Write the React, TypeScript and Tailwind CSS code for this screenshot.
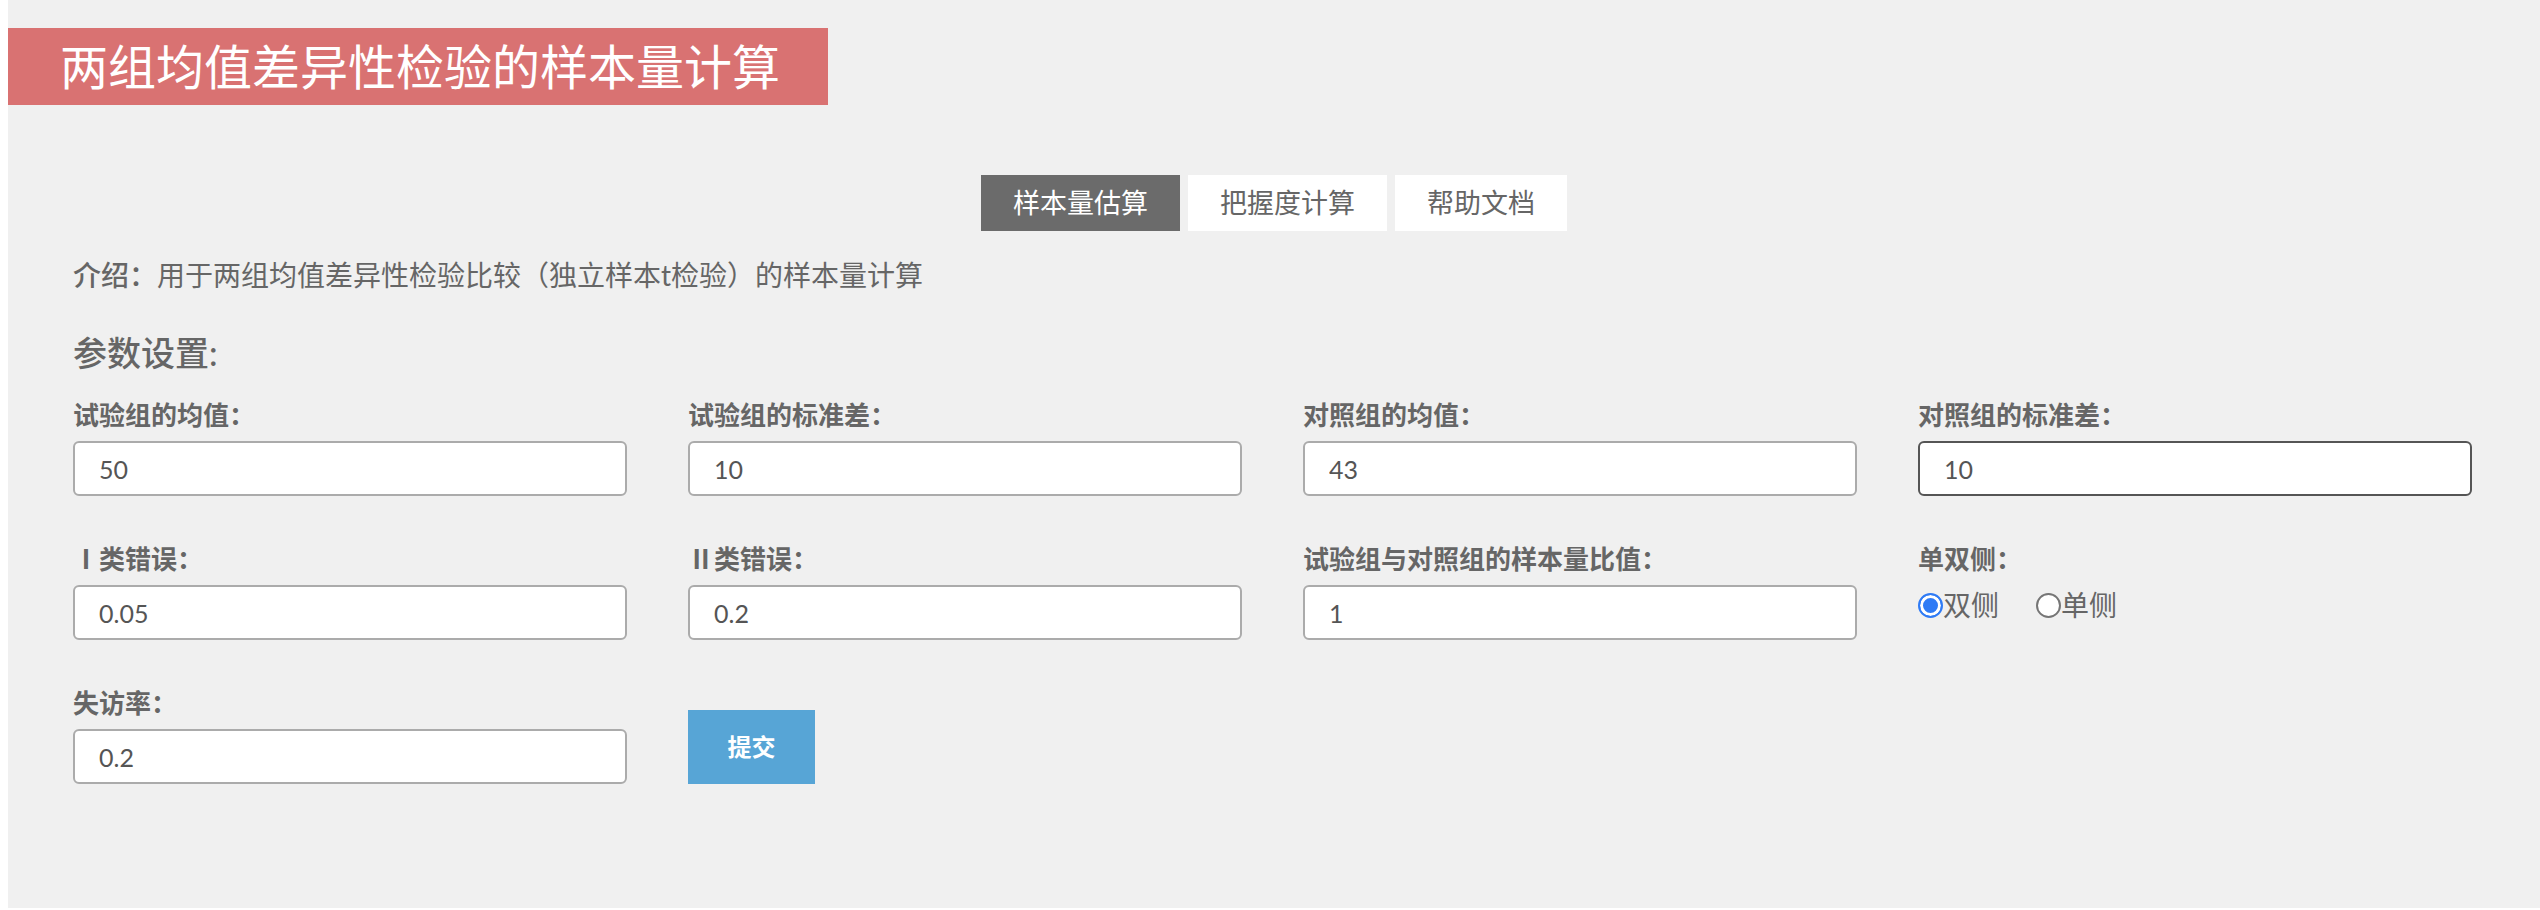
import { useState } from "react";

const fields = [
  { label: "试验组的均值：", value: "50" },
  { label: "试验组的标准差：", value: "10" },
  { label: "对照组的均值：", value: "43" },
  { label: "对照组的标准差：", value: "10", focused: true },
  { label: "Ⅰ类错误：", value: "0.05" },
  { label: "Ⅱ类错误：", value: "0.2" },
  { label: "试验组与对照组的样本量比值：", value: "1" },
];

const tabs = ["样本量估算", "把握度计算", "帮助文档"];

function Field({ label, value, focused }: { label: string; value: string; focused?: boolean }) {
  return (
    <div className="flex flex-col">
      <label className="h-[39px] leading-[39px] mb-[6px] text-[26px] font-bold text-[#666]">{label}</label>
      <input
        defaultValue={value}
        className={
          "h-[55px] w-full rounded-[6px] border-2 bg-white pl-[24px] text-[25px] text-[#555] outline-none " +
          (focused ? "border-[#555]" : "border-[#ababab]")
        }
      />
    </div>
  );
}

export default function App() {
  const [tab, setTab] = useState(0);
  const [side, setSide] = useState("two");

  return (
    <div
      className="min-h-[910px] bg-white pl-2"
      style={{ fontFamily: 'Lato, "Noto Sans CJK SC", sans-serif' }}
    >
      <div className="h-[908px] bg-[#f0f0f0] pt-[28px]">
        {/* 标题 */}
        <div className="flex h-[77px] w-[820px] items-center bg-[#d97272] pl-[52px] text-[48px] text-white">
          两组均值差异性检验的样本量计算
        </div>

        {/* 选项卡 */}
        <div className="mt-[70px] flex justify-center gap-2">
          {tabs.map((t, i) => (
            <button
              key={t}
              onClick={() => setTab(i)}
              className={
                "h-[56px] px-8 text-[27px] " +
                (tab === i ? "bg-[#6b6b6b] text-white" : "bg-white text-[#666]")
              }
            >
              {t}
            </button>
          ))}
        </div>

        <div className="pl-[65px] pr-[68px]">
          <p className="mt-[24px] text-[28px] leading-[40px] text-[#666]">
            <span className="font-medium">介绍：</span>用于两组均值差异性检验比较（独立样本t检验）的样本量计算
          </p>

          <h2 className="mt-[34px] text-[34px] font-medium leading-[48px] text-[#666]">参数设置:</h2>

          <div className="mt-[19px] grid grid-cols-4 gap-x-[61px] gap-y-[44px]">
            {fields.map((f) => (
              <Field key={f.label} {...f} />
            ))}

            <div className="flex flex-col">
              <label className="h-[39px] leading-[39px] mb-[6px] text-[26px] font-bold text-[#666]">单双侧：</label>
              <div className="flex h-[40px] items-center gap-[37px] text-[28px] text-[#666]">
                <label className="flex items-center">
                  <input
                    type="radio"
                    name="side"
                    checked={side === "two"}
                    onChange={() => setSide("two")}
                    className="h-[25px] w-[25px] appearance-none rounded-full border-2 border-[#767676] bg-white checked:border-[#2f7bf5] checked:bg-[#2f7bf5] checked:shadow-[inset_0_0_0_3px_white]"
                  />
                  双侧
                </label>
                <label className="flex items-center">
                  <input
                    type="radio"
                    name="side"
                    checked={side === "one"}
                    onChange={() => setSide("one")}
                    className="h-[25px] w-[25px] appearance-none rounded-full border-2 border-[#767676] bg-white checked:border-[#2f7bf5] checked:bg-[#2f7bf5] checked:shadow-[inset_0_0_0_3px_white]"
                  />
                  单侧
                </label>
              </div>
            </div>

            <Field label="失访率：" value="0.2" />

            <div className="flex items-end">
              <button className="h-[74px] w-[127px] bg-[#57a5d6] text-[24px] font-bold text-white">提交</button>
            </div>
          </div>
        </div>
      </div>
    </div>
  );
}
